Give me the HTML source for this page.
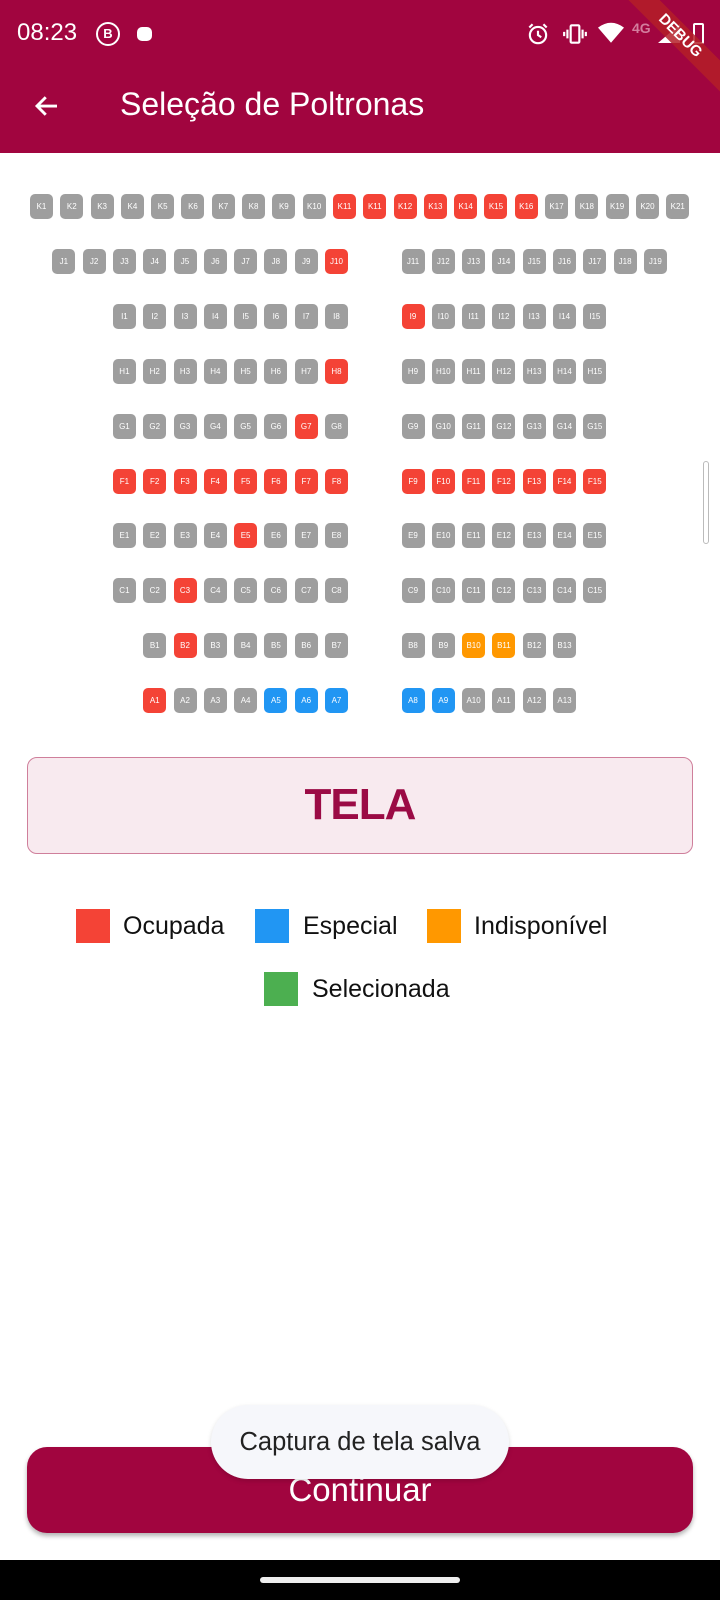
<!DOCTYPE html>
<html><head><meta charset="utf-8"><style>
*{margin:0;padding:0;box-sizing:border-box}
body{width:720px;height:1600px;position:relative;overflow:hidden;background:#fff;font-family:"Liberation Sans",sans-serif}
.bar{position:absolute;left:0;top:0;width:720px;height:153px;background:#a1053f}
.row{position:absolute;display:flex;gap:7.3px}
.row.k{left:30px}
.row.l{right:372px}
.row.r{left:401.5px}
.s{flex:none;width:23px;height:25px;border-radius:5px;background:#9e9e9e;color:#fff;font-size:8px;display:flex;align-items:center;justify-content:center;overflow:hidden;font-family:"Liberation Sans Narrow","Liberation Sans",sans-serif}
.x{background:#f44336}.b{background:#2196f3}.o{background:#ff9800}
.leg{position:absolute;font-size:25px;color:#111;line-height:34px}
.sq{position:absolute;width:34px;height:34px}
</style></head><body>
<div class="bar"></div>
<div style="position:absolute;left:17px;top:19px;color:#fff;font-size:24px">08:23</div>
<div style="position:absolute;left:96px;top:22px;width:24px;height:24px;border:2.5px solid #fff;border-radius:50%;color:#fff;font-size:13px;font-weight:bold;text-align:center;line-height:19px">B</div>
<div style="position:absolute;left:137px;top:27px;width:15px;height:14px;background:#fff;border-radius:5px"></div>
<svg style="position:absolute;left:525px;top:21px" width="26" height="26" viewBox="0 0 24 24"><circle cx="12" cy="13" r="7.5" fill="none" stroke="#fff" stroke-width="2"/><path d="M12 9v4l3 2M4 6l3-3M20 6l-3-3" stroke="#fff" stroke-width="2" fill="none"/></svg>
<svg style="position:absolute;left:562px;top:21px" width="26" height="26" viewBox="0 0 24 24"><rect x="8" y="4" width="8" height="16" rx="1" fill="none" stroke="#fff" stroke-width="2"/><path d="M5 8v8M2 10v4M19 8v8M22 10v4" stroke="#fff" stroke-width="2"/></svg>
<svg style="position:absolute;left:598px;top:22px" width="26" height="22" viewBox="0 0 24 20"><path d="M12 19L0 5Q12-4 24 5Z" fill="#fff"/></svg>
<div style="position:absolute;left:632px;top:20px;color:#d37d9d;font-size:14px;font-weight:bold">4G</div>
<svg style="position:absolute;left:658px;top:24px" width="24" height="20" viewBox="0 0 24 20"><path d="M0 19L22 0V19Z" fill="#fff"/></svg>
<div style="position:absolute;left:693px;top:23px;width:11px;height:21px;border:2px solid #fff;border-radius:2px"></div>
<div style="position:absolute;left:605px;top:25px;width:150px;height:22px;background:rgba(180,30,40,.85);transform:rotate(45deg);color:#fff;font-size:15px;font-weight:bold;text-align:center;line-height:22px">DEBUG</div>
<svg style="position:absolute;left:32px;top:91px" width="30" height="30" viewBox="0 0 24 24"><path d="M20 12H5M11 5l-7 7 7 7" stroke="#fff" stroke-width="2.3" fill="none"/></svg>
<div style="position:absolute;left:120px;top:86px;color:#fff;font-size:32px">Seleção de Poltronas</div>

<div class="row k" style="top:194px"><div class="s">K1</div><div class="s">K2</div><div class="s">K3</div><div class="s">K4</div><div class="s">K5</div><div class="s">K6</div><div class="s">K7</div><div class="s">K8</div><div class="s">K9</div><div class="s">K10</div><div class="s x">K11</div><div class="s x">K11</div><div class="s x">K12</div><div class="s x">K13</div><div class="s x">K14</div><div class="s x">K15</div><div class="s x">K16</div><div class="s">K17</div><div class="s">K18</div><div class="s">K19</div><div class="s">K20</div><div class="s">K21</div></div>

<div class="row l" style="top:249px"><div class="s">J1</div><div class="s">J2</div><div class="s">J3</div><div class="s">J4</div><div class="s">J5</div><div class="s">J6</div><div class="s">J7</div><div class="s">J8</div><div class="s">J9</div><div class="s x">J10</div></div>
<div class="row r" style="top:249px"><div class="s">J11</div><div class="s">J12</div><div class="s">J13</div><div class="s">J14</div><div class="s">J15</div><div class="s">J16</div><div class="s">J17</div><div class="s">J18</div><div class="s">J19</div></div>

<div class="row l" style="top:304px"><div class="s">I1</div><div class="s">I2</div><div class="s">I3</div><div class="s">I4</div><div class="s">I5</div><div class="s">I6</div><div class="s">I7</div><div class="s">I8</div></div>
<div class="row r" style="top:304px"><div class="s x">I9</div><div class="s">I10</div><div class="s">I11</div><div class="s">I12</div><div class="s">I13</div><div class="s">I14</div><div class="s">I15</div></div>

<div class="row l" style="top:359px"><div class="s">H1</div><div class="s">H2</div><div class="s">H3</div><div class="s">H4</div><div class="s">H5</div><div class="s">H6</div><div class="s">H7</div><div class="s x">H8</div></div>
<div class="row r" style="top:359px"><div class="s">H9</div><div class="s">H10</div><div class="s">H11</div><div class="s">H12</div><div class="s">H13</div><div class="s">H14</div><div class="s">H15</div></div>

<div class="row l" style="top:414px"><div class="s">G1</div><div class="s">G2</div><div class="s">G3</div><div class="s">G4</div><div class="s">G5</div><div class="s">G6</div><div class="s x">G7</div><div class="s">G8</div></div>
<div class="row r" style="top:414px"><div class="s">G9</div><div class="s">G10</div><div class="s">G11</div><div class="s">G12</div><div class="s">G13</div><div class="s">G14</div><div class="s">G15</div></div>

<div class="row l" style="top:469px"><div class="s x">F1</div><div class="s x">F2</div><div class="s x">F3</div><div class="s x">F4</div><div class="s x">F5</div><div class="s x">F6</div><div class="s x">F7</div><div class="s x">F8</div></div>
<div class="row r" style="top:469px"><div class="s x">F9</div><div class="s x">F10</div><div class="s x">F11</div><div class="s x">F12</div><div class="s x">F13</div><div class="s x">F14</div><div class="s x">F15</div></div>

<div class="row l" style="top:523px"><div class="s">E1</div><div class="s">E2</div><div class="s">E3</div><div class="s">E4</div><div class="s x">E5</div><div class="s">E6</div><div class="s">E7</div><div class="s">E8</div></div>
<div class="row r" style="top:523px"><div class="s">E9</div><div class="s">E10</div><div class="s">E11</div><div class="s">E12</div><div class="s">E13</div><div class="s">E14</div><div class="s">E15</div></div>

<div class="row l" style="top:578px"><div class="s">C1</div><div class="s">C2</div><div class="s x">C3</div><div class="s">C4</div><div class="s">C5</div><div class="s">C6</div><div class="s">C7</div><div class="s">C8</div></div>
<div class="row r" style="top:578px"><div class="s">C9</div><div class="s">C10</div><div class="s">C11</div><div class="s">C12</div><div class="s">C13</div><div class="s">C14</div><div class="s">C15</div></div>

<div class="row l" style="top:633px"><div class="s">B1</div><div class="s x">B2</div><div class="s">B3</div><div class="s">B4</div><div class="s">B5</div><div class="s">B6</div><div class="s">B7</div></div>
<div class="row r" style="top:633px"><div class="s">B8</div><div class="s">B9</div><div class="s o">B10</div><div class="s o">B11</div><div class="s">B12</div><div class="s">B13</div></div>

<div class="row l" style="top:688px"><div class="s x">A1</div><div class="s">A2</div><div class="s">A3</div><div class="s">A4</div><div class="s b">A5</div><div class="s b">A6</div><div class="s b">A7</div></div>
<div class="row r" style="top:688px"><div class="s b">A8</div><div class="s b">A9</div><div class="s">A10</div><div class="s">A11</div><div class="s">A12</div><div class="s">A13</div></div>

<div style="position:absolute;left:703px;top:461px;width:6px;height:83px;border:1px solid #bbb;border-radius:3px"></div>

<div style="position:absolute;left:27px;top:757px;width:666px;height:97px;border:1.5px solid #cf7f9b;background:#f8eaef;border-radius:10px;text-align:center;line-height:94px;font-size:44px;color:#9b0b45;font-weight:bold;letter-spacing:-1px">TELA</div>

<div class="sq" style="left:76px;top:909px;background:#f44336"></div><div class="leg" style="left:123px;top:909px">Ocupada</div>
<div class="sq" style="left:255px;top:909px;background:#2196f3"></div><div class="leg" style="left:303px;top:909px">Especial</div>
<div class="sq" style="left:427px;top:909px;background:#ff9800"></div><div class="leg" style="left:474px;top:909px">Indisponível</div>
<div class="sq" style="left:264px;top:972px;background:#4caf50"></div><div class="leg" style="left:312px;top:972px">Selecionada</div>

<div style="position:absolute;left:27px;top:1447px;width:666px;height:86px;background:#a1053f;border-radius:20px;box-shadow:0 3px 5px rgba(0,0,0,.3);color:#fff;font-size:33px;text-align:center;line-height:86px">Continuar</div>
<div style="position:absolute;left:211px;top:1405px;width:298px;height:74px;background:#f6f7fb;border-radius:37px;box-shadow:0 2px 5px rgba(0,0,0,.15);color:#222;font-size:25.5px;text-align:center;line-height:74px">Captura de tela salva</div>

<div style="position:absolute;left:0;top:1560px;width:720px;height:40px;background:#000"></div>
<div style="position:absolute;left:260px;top:1577px;width:200px;height:6px;background:#eee;border-radius:3px"></div>
</body></html>
